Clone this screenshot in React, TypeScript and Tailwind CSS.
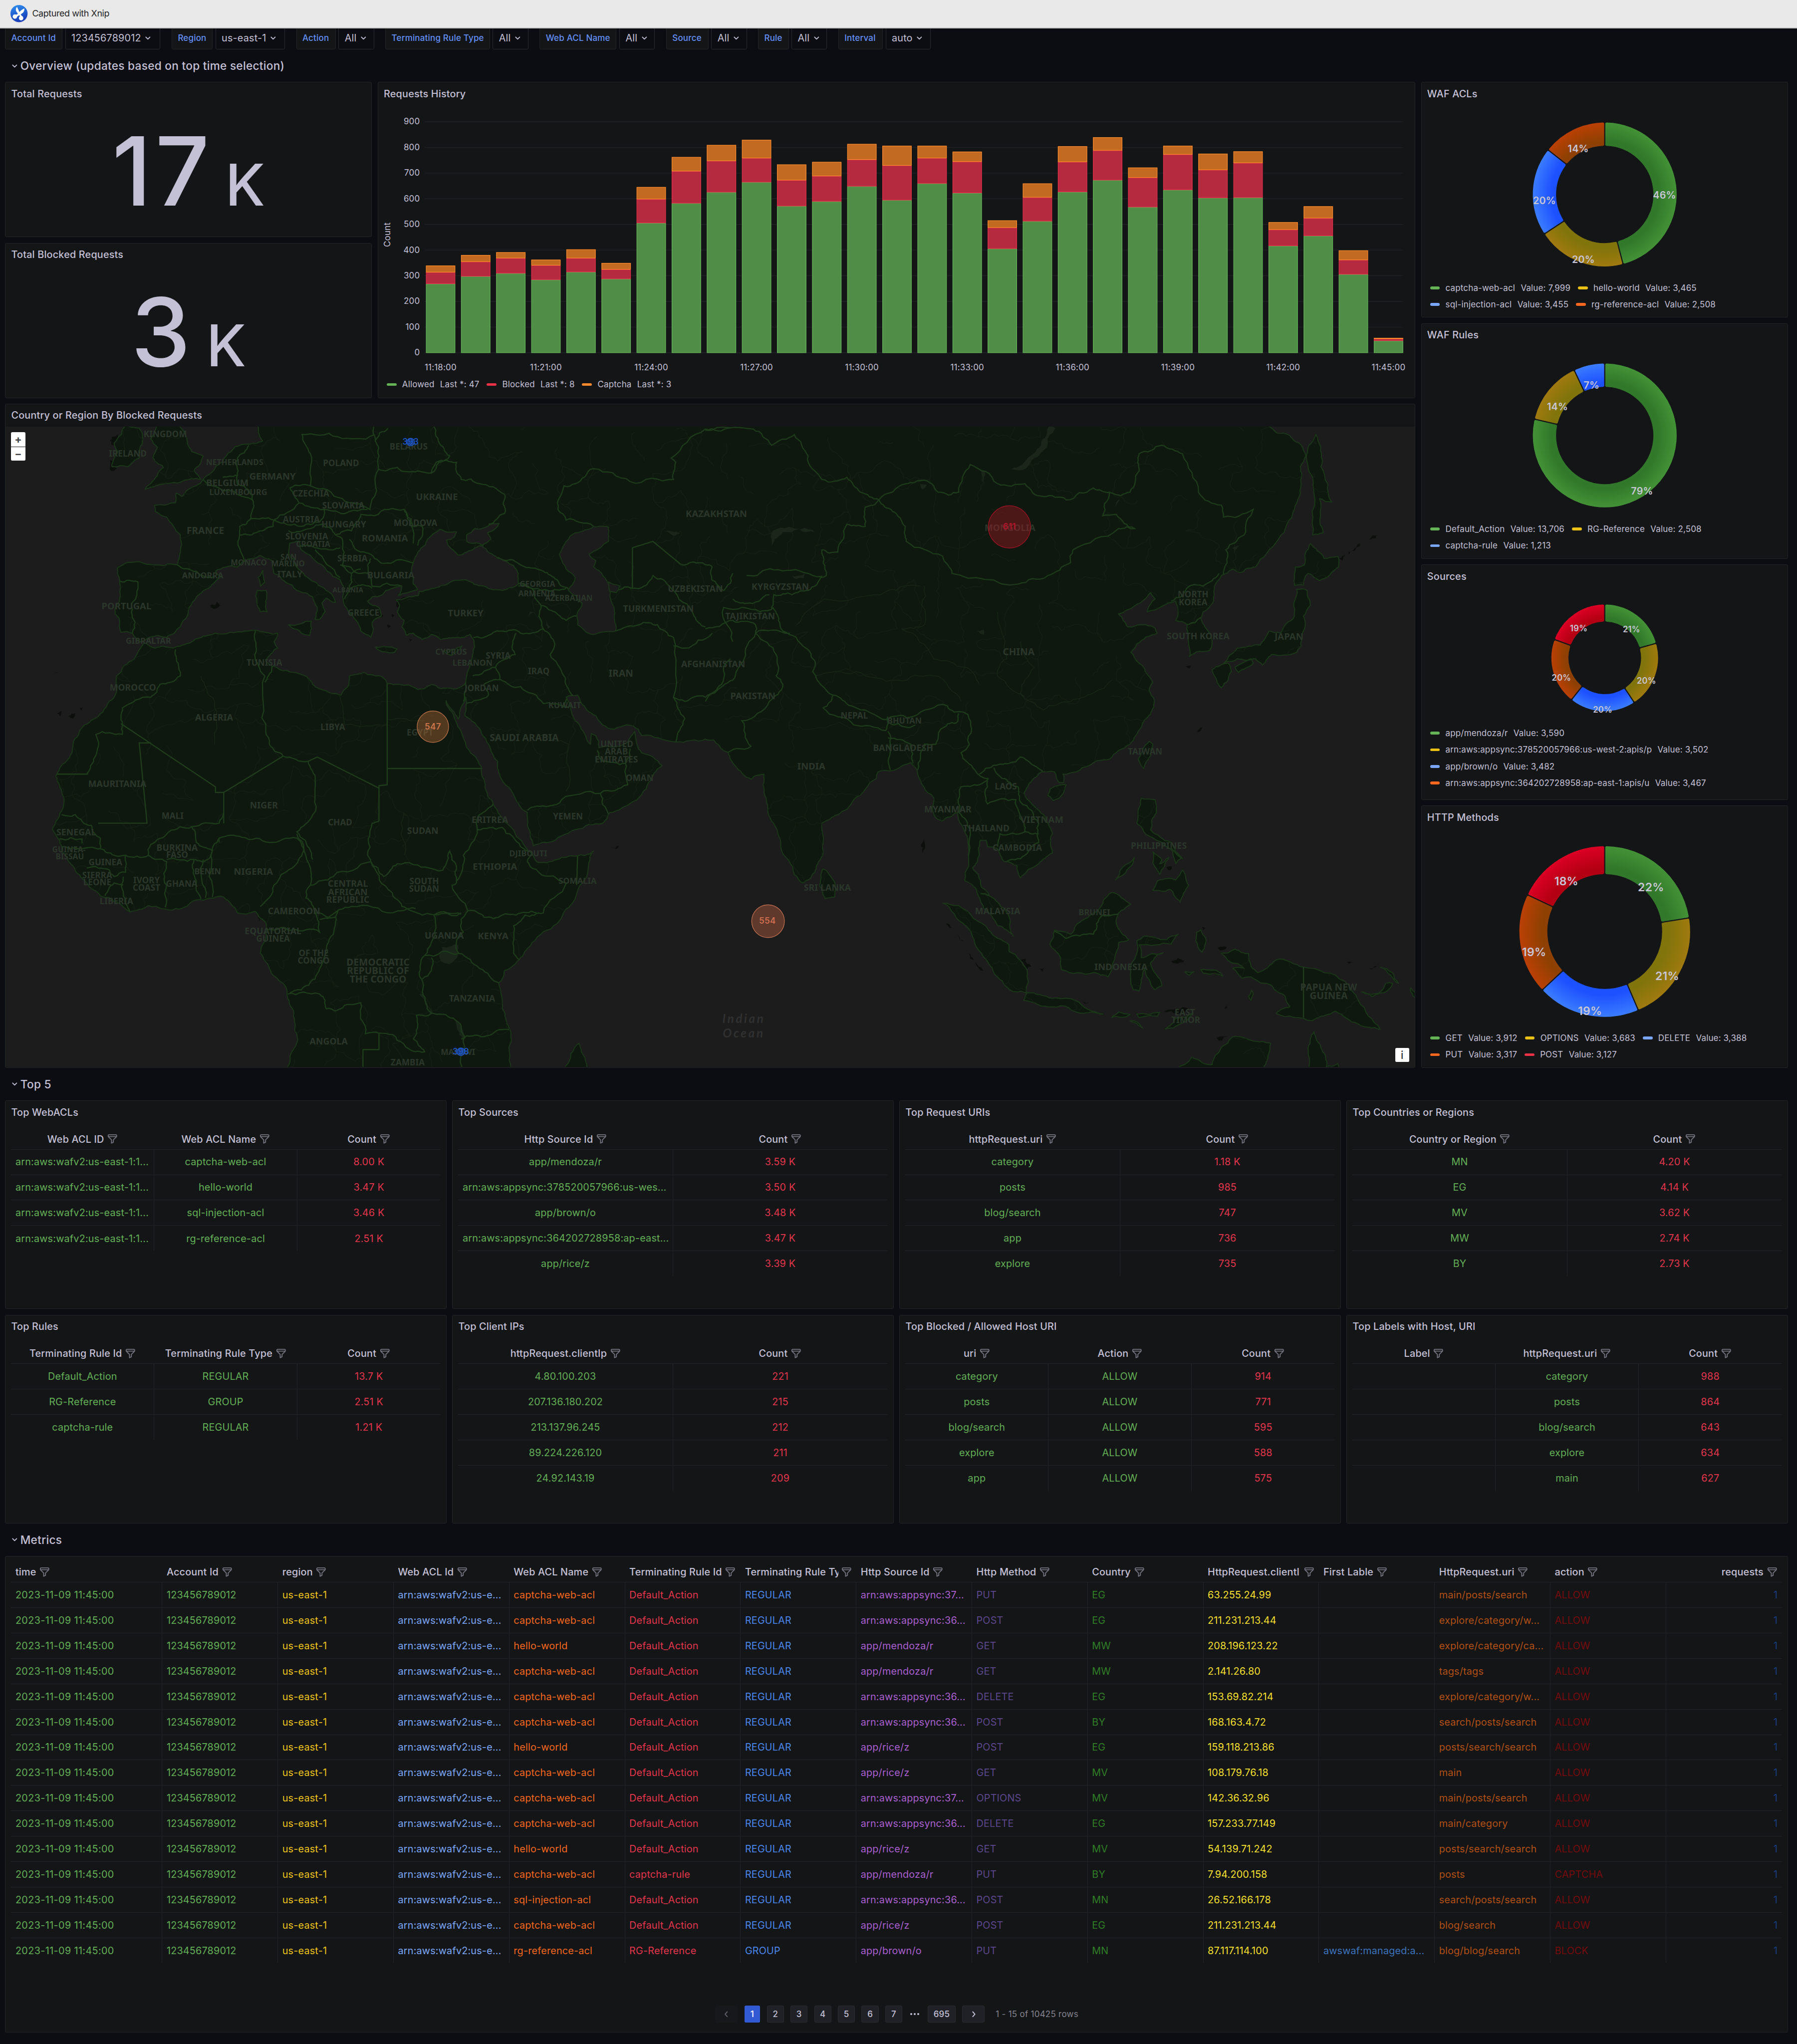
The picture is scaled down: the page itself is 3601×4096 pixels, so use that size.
import React from "react";

/* ------------------------------------------------------------------ icons */

function FilterIcon() {
  return (
    <svg viewBox="0 0 24 24" className="h-4 w-4 shrink-0 fill-[#73727e]">
      <path d="M19,2H5A3,3,0,0,0,2,5V6.17a3,3,0,0,0,.25,1.2l0,.06a2.81,2.81,0,0,0,.59.86L9,14.41V21a1,1,0,0,0,.47.85A1,1,0,0,0,10,22a1,1,0,0,0,.45-.11l4-2A1,1,0,0,0,15,19V14.41l6.12-6.12a2.81,2.81,0,0,0,.59-.86l0-.06A3,3,0,0,0,22,6.17V5A3,3,0,0,0,19,2ZM13.29,13.29A1,1,0,0,0,13,14v4.38l-2,1V14a1,1,0,0,0-.29-.71L5.41,8H18.59ZM20,6H4V5A1,1,0,0,1,5,4H19a1,1,0,0,1,1,1Z" />
    </svg>
  );
}

function AngleDown() {
  return (
    <svg viewBox="0 0 24 24" className="h-4 w-4 shrink-0 fill-[#c4c1d6]">
      <path d="M17,9.17a1,1,0,0,0-1.41,0L12,12.71,8.46,9.17a1,1,0,0,0-1.41,0,1,1,0,0,0,0,1.42l4.24,4.24a1,1,0,0,0,1.42,0L17,10.59A1,1,0,0,0,17,9.17Z" />
    </svg>
  );
}

function AngleSide({ className }: { className: string }) {
  return (
    <svg viewBox="0 0 16 16" className={className} fill="none" strokeWidth="1.4" strokeLinecap="round" strokeLinejoin="round">
      <path d="M6.6 4.6 L9.6 8 L6.6 11.4" />
    </svg>
  );
}

function ScissorsLogo() {
  return (
    <svg viewBox="83 37 154 158" className="h-[26.3px] w-[25.6px]">
      <defs>
        <linearGradient id="logo" x1="0.3" y1="0" x2="0.6" y2="1">
          <stop offset="0" stopColor="#2f8cec" />
          <stop offset="1" stopColor="#1436b4" />
        </linearGradient>
      </defs>
      <circle cx="160" cy="118" r="74" fill="#c9cbd4" />
      <circle cx="160" cy="114" r="73" fill="url(#logo)" />
      <path d="M143 57 C130 70 130 88 142 104 L160 128 L176 140 L183 132 C166 116 160 88 143 57 Z" fill="#fff" />
      <path d="M206 71 C184 78 165 98 148 118 L132 126 L146 140 L166 124 C190 116 208 98 206 71 Z" fill="#fff" />
      <circle cx="125" cy="140" r="19" fill="#fff" />
      <circle cx="178" cy="153" r="19" fill="#fff" />
    </svg>
  );
}

/* ----------------------------------------------------------------- layout */

function Panel({ title, className = "", children }: { title?: string; className?: string; children?: React.ReactNode }) {
  return (
    <section className={`flex flex-col overflow-hidden rounded-[2px] border border-[#232427] bg-[#141517] ${className}`}>
      {title && <h2 className="flex h-8 shrink-0 items-center px-2 text-sm font-medium">{title}</h2>}
      {children}
    </section>
  );
}

function RowTitle({ children }: { children: React.ReactNode }) {
  return (
    <div className="flex h-[30px] items-center pl-[5.6px] text-base font-medium tracking-[0.2px]">
      <AngleDown />
      <span>{children}</span>
    </div>
  );
}

const variables = [
  { label: "Account Id", value: "123456789012", lw: "w-[81.3px]", vw: "w-[135px]" },
  { label: "Region", value: "us-east-1", lw: "w-[58px]", vw: "w-[98.6px]" },
  { label: "Action", value: "All", lw: "w-[56px]", vw: "w-[50.4px]" },
  { label: "Terminating Rule Type", value: "All", lw: "w-[148.2px]", vw: "w-[50.6px]" },
  { label: "Web ACL Name", value: "All", lw: "w-[109px]", vw: "w-[50.4px]" },
  { label: "Source", value: "All", lw: "w-[60px]", vw: "w-[50.4px]" },
  { label: "Rule", value: "All", lw: "w-[43.4px]", vw: "w-[50.4px]" },
  { label: "Interval", value: "auto", lw: "w-[63px]", vw: "w-[64px]" },
];

function VariableBar() {
  return (
    <div className="flex h-[30px] gap-4 overflow-hidden pl-[7.2px]">
      {variables.map((v) => (
        <div key={v.label} className="-mt-[2px] flex h-8 gap-1">
          <div className={`flex items-center whitespace-nowrap rounded-[2px] border border-[#232427] bg-[#141517] px-2 text-xs font-medium text-[#6390fb] ${v.lw}`}>
            {v.label}
          </div>
          <div className={`flex items-center whitespace-nowrap rounded-[2px] border border-[#2a2b30] pl-2 text-sm ${v.vw}`}>
            {v.value}
            <span className="ml-[2px]">
              <AngleDown />
            </span>
          </div>
        </div>
      ))}
    </div>
  );
}

function Stat({ title, value }: { title: string; value: string }) {
  return (
    <Panel title={title} className="h-[220px]">
      <div className="flex flex-1 items-baseline justify-center pt-[13px] font-medium leading-[1.2]">
        <span className="text-[134.8px] tracking-[0.04em]">{value}</span>
        <span className="ml-[17px] text-[82px] tracking-normal">K</span>
      </div>
    </Panel>
  );
}

type LegendItem = { name: string; value: string; dot: string };

function Legend({ rows, className = "" }: { rows: LegendItem[][]; className?: string }) {
  return (
    <div className={`pt-[0.4px] text-xs tracking-[0.12px] ${className}`}>
      {rows.map((row, i) => (
        <div key={i} className="flex h-[23.6px] items-center gap-[10.5px]">
          {row.map((it) => (
            <div key={it.name} className="flex items-center gap-2 whitespace-nowrap">
              <span className={`h-1 w-3.5 rounded-full ${it.dot}`} />
              <span>{it.name}</span>
              <span>{it.value}</span>
            </div>
          ))}
        </div>
      ))}
    </div>
  );
}

/* -------------------------------------------------------------- bar chart */

// [allowed, allowed + blocked, total] for every minute
const history: [number, number, number][] = [
  [269, 314, 340], [298, 355, 381], [310, 369, 392], [285, 341, 363], [315, 369, 403], [288, 325, 350],
  [506, 599, 646], [583, 708, 763], [626, 748, 810], [665, 759, 830], [572, 673, 734], [590, 689, 744],
  [649, 753, 814], [595, 730, 807], [660, 759, 807], [623, 745, 784], [406, 488, 516], [513, 606, 660],
  [627, 744, 805], [673, 789, 840], [568, 683, 722], [635, 773, 807], [604, 713, 776], [605, 740, 785],
  [417, 480, 509], [456, 525, 571], [306, 362, 399], [47, 55, 58],
];

function HistoryChart() {
  const y = (v: number) => 499.8 - v * 0.3638;
  const x0 = 603.6;
  const pitch = 49.78;
  const w = 41.6;
  const layers = [
    { fill: "#508e48", line: "#65b358" },
    { fill: "#b62a3f", line: "#e2304a" },
    { fill: "#c26a22", line: "#fa8a2c" },
  ];
  return (
    <svg viewBox="536.3 149 1469.4 384" className="block h-[384px] w-full" fill="#c4c1d6" fontSize="12">
      {[0, 1, 2, 3, 4, 5, 6, 7, 8, 9].map((n) => (
        <g key={n}>
          <line x1="601.5" x2="1989.2" y1={y(n * 100)} y2={y(n * 100)} stroke="#212226" strokeWidth="1" />
          <text x="595" y={y(n * 100) - 0.4} textAnchor="end" dominantBaseline="central">
            {n * 100}
          </text>
        </g>
      ))}
      {history.map((h, i) =>
        layers.map((l, k) => {
          const from = k === 0 ? 0 : h[k - 1];
          const top = y(h[k]);
          return (
            <rect
              key={`${i}-${k}`}
              x={x0 + i * pitch + 0.4}
              y={top + 0.5}
              width={w - 0.8}
              height={Math.max(y(from) - top - 0.5, 0.8)}
              fill={l.fill}
              stroke={l.line}
              strokeWidth="0.9"
            />
          );
        }),
      )}
      {["11:18:00", "11:21:00", "11:24:00", "11:27:00", "11:30:00", "11:33:00", "11:36:00", "11:39:00", "11:42:00", "11:45:00"].map((t, i) => (
        <text key={t} x={x0 + i * 3 * pitch + w / 2} y="520.3" textAnchor="middle" dominantBaseline="central">
          {t}
        </text>
      ))}
      <text transform="translate(549 332.5) rotate(-90)" textAnchor="middle" dominantBaseline="central">
        Count
      </text>
    </svg>
  );
}

/* ----------------------------------------------------------------- donuts */

const shades: Record<string, [string, string]> = {
  green: ["#31782a", "#439236"],
  yellow: ["#80740b", "#a07a0e"],
  blue: ["#1c51ff", "#3b7cff"],
  orange: ["#8e4003", "#bb4004"],
  red: ["#b30012", "#dc0024"],
};
const sliceOrder = ["green", "yellow", "blue", "orange", "red"];

function slicePath(cx: number, cy: number, rIn: number, rOut: number, a0: number, a1: number) {
  const pad = 2.8;
  const ri = rIn + 2;
  const ro = rOut - 2;
  const pt = (r: number, a: number) => `${(cx + r * Math.sin(a)).toFixed(2)} ${(cy - r * Math.cos(a)).toFixed(2)}`;
  const oi = Math.asin(pad / ri);
  const oo = Math.asin(pad / ro);
  const large = a1 - a0 > Math.PI ? 1 : 0;
  return `M${pt(ro, a0 + oo)} A${ro} ${ro} 0 ${large} 1 ${pt(ro, a1 - oo)} L${pt(ri, a1 - oi)} A${ri} ${ri} 0 ${large} 0 ${pt(ri, a0 + oi)} Z`;
}

type DonutProps = {
  id: string;
  values: number[];
  cy: number;
  rIn: number;
  rOut: number;
  size: number;
  labels: [string, number, number][];
  top: number;
  height: number;
  className: string;
};

function Donut({ id, values, cy, rIn, rOut, size, labels, top, height, className }: DonutProps) {
  const cx = 2274.9;
  const total = values.reduce((a, b) => a + b, 0);
  let acc = 0;
  return (
    <svg viewBox={`2015.7 ${top} 518.3 ${height}`} className={`block w-full shrink-0 ${className}`}>
      <defs>
        {sliceOrder.map((c) => (
          <radialGradient key={c} id={`${id}-${c}`} gradientUnits="userSpaceOnUse" cx={cx} cy={cy} r={rOut}>
            <stop offset="0.74" stopColor={shades[c][0]} />
            <stop offset="1" stopColor={shades[c][1]} />
          </radialGradient>
        ))}
      </defs>
      {values.map((v, i) => {
        const a0 = (acc / total) * Math.PI * 2;
        acc += v;
        const a1 = (acc / total) * Math.PI * 2;
        const paint = `url(#${id}-${sliceOrder[i]})`;
        return <path key={i} d={slicePath(cx, cy, rIn, rOut, a0, a1)} fill={paint} stroke={paint} strokeWidth="4" strokeLinejoin="round" />;
      })}
      {labels.map(([t, x, y]) => (
        <text key={`${t}${x}`} x={x} y={y} fontSize={size} fontWeight="600" fill="#c8c6d6" textAnchor="middle" dominantBaseline="central">
          {t}
        </text>
      ))}
    </svg>
  );
}

const G = "bg-[#65b257]";
const Y = "bg-[#ecc116]";
const B = "bg-[#7aa6fb]";
const O = "bg-[#fa671e]";
const R = "bg-[#ea3148]";

/* -------------------------------------------------------------------- map */

type Pt = [number, number];

// West half coordinates are used as they are, east half ones start at x = 1545.
const west = (s: string): Pt[] => {
  const n = s.trim().split(/\s+/).map(Number);
  const out: Pt[] = [];
  for (let i = 0; i < n.length; i += 2) out.push([n[i] / 1.5448, 570 + n[i + 1] / 1.6505]);
  return out;
};
const east = (s: string): Pt[] => west(s).map(([x, y]) => [x + 1000, y] as Pt);

function noise(seed: number) {
  const v = Math.sin(seed * 127.1 + 311.7) * 43758.5453;
  return v - Math.floor(v) - 0.5;
}

// Splits long segments and shifts the new points sideways, for a natural line.
function rough(points: Pt[], amount: number, closed: boolean) {
  let pts = closed ? [...points, points[0]] : points;
  for (let pass = 0; pass < 3; pass++) {
    const next: Pt[] = [];
    for (let i = 0; i < pts.length - 1; i++) {
      const [ax, ay] = pts[i];
      const [bx, by] = pts[i + 1];
      next.push(pts[i]);
      const len = Math.hypot(bx - ax, by - ay);
      if (len > 5) {
        const k = noise(ax * 1.3 + by * 0.7 + pass) * amount * Math.min(len, 30);
        next.push([(ax + bx) / 2 - ((by - ay) / len) * k, (ay + by) / 2 + ((bx - ax) / len) * k]);
      }
    }
    next.push(pts[pts.length - 1]);
    pts = next;
  }
  return "M" + pts.map(([x, y]) => `${x.toFixed(1)} ${y.toFixed(1)}`).join("L") + (closed ? "Z" : "");
}

const mainland: Pt[] = [
  ...west(
    "563 40 566 70 575 90 543 97 515 103 500 118 488 138 462 165 445 180 430 195 408 207 398 220 386 212 384 235 368 238 338 241 340 255 365 268 380 290 395 310 396 340 388 380 345 380 280 374 257 387 262 415 262 460 252 495 262 510 265 538 290 540 308 560 335 548 365 550 395 525 410 500 414 480 430 455 462 430 485 408 472 395 495 385 520 385 535 372 570 358 595 370 600 400 625 420 650 440 685 455 695 480 690 508 700 508 712 490 705 470 715 458 735 468 722 445 690 420 665 400 650 385 632 355 634 330 655 325 660 345 690 370 745 415 752 430 750 455 765 490 780 510 790 535 812 550 818 530 815 515 835 500 830 480 805 465 815 455 838 450 845 440 880 430 872 452 890 446 915 438 905 425 902 400 905 375 915 350 930 335 948 308 963 297 1000 303 995 315 978 322 980 330 1003 357 1040 340 1058 335 1050 330 1022 325 1022 310 1040 295 1068 290 1093 283 1085 295 1068 305 1075 320 1055 335 1090 365 1125 382 1135 400 1135 425 1100 440 1060 430 1020 415 990 418 950 435 918 442 916 452 890 457 868 462 875 475 870 490 885 510 880 525 890 545 905 540 925 555 945 543 965 555 1000 550 1030 543 1037 555 1035 590 1032 610 1020 655 1005 668 960 668 945 660 915 672 875 660 848 658 840 645 795 632 765 640 762 665 747 685 715 675 685 660 672 642 612 625 582 605 608 575 600 560 608 540 598 543 560 533 520 537 455 545 420 560 378 575 340 575 315 563 295 600 255 640 250 690 215 735 185 755 160 800 145 840 122 875 135 910 138 950 115 1000 130 1025 135 1050 160 1085 190 1125 220 1155 285 1193 325 1178 385 1185 430 1165 490 1158 520 1195 560 1192 580 1215 583 1250 570 1290 590 1325 620 1360 633 1400 645 1450 652 1490 635 1530 625 1580 1120 1580 1118 1500 1115 1465 1100 1420 1092 1360 1105 1330 1140 1300 1165 1265 1220 1220 1255 1170 1285 1110 1300 1050 1262 1062 1220 1070 1175 1075 1165 1055 1150 1040 1115 990 1080 940 1062 900 1055 855 1030 820 1010 770 985 720 977 698 990 720 1003 741 1018 700 1020 690 1018 733 1040 750 1070 800 1090 840 1095 875 1130 930 1155 960 1155 990 1168 1038 1200 1030 1260 1000 1320 985 1335 960 1385 935 1415 905 1420 890 1450 850 1430 830 1405 820 1395 800 1390 770 1375 795 1350 805 1312 808 1305 780 1295 775 1293 800 1280 775 1255 735 1250 710 1240 690 1265 685 1285 720 1320 755 1345 765 1375 755 1398 765 1405 780 1480 795",
  ),
  ...east(
    "0 788 18 790 40 815 50 820 65 850 100 882 128 870 130 920 145 980 165 1040 195 1105 213 1125 240 1100 252 1070 258 1030 255 985 290 965 325 930 375 880 378 865 410 862 425 855 450 843 465 870 500 925 503 970 518 980 552 960 562 990 575 1030 577 1085 568 1120 585 1130 602 1165 610 1185 640 1225 675 1250 665 1205 640 1170 622 1155 605 1135 598 1105 585 1090 600 1060 602 1025 615 1025 618 1040 640 1045 655 1075 683 1085 690 1113 730 1080 760 1055 760 1010 745 975 715 940 698 915 715 885 735 865 765 865 775 890 785 890 783 870 840 850 885 835 930 800 955 760 975 730 983 695 972 675 980 655 960 620 932 585 945 565 990 540 985 528 955 520 925 525 905 495 925 485 975 445 985 460 968 490 1030 465 1035 480 1030 510 1055 520 1058 560 1060 595 1105 580 1108 545 1085 505 1090 490 1113 465 1115 430 1130 405 1155 390 1170 398 1205 385 1255 320 1290 250 1305 190 1303 150 1315 125 1305 100 1280 77 1250 70 1210 40",
  ),
];

const islands: Pt[][] = [
  west("350 40 338 70 330 85 345 105 335 130 358 152 330 190 318 203 350 192 400 184 440 180 425 160 445 125 420 115 410 90 380 40"),
  west("275 50 250 95 258 115 245 150 280 150 305 130 312 95 305 60"),
  west("563 440 583 440 585 490 570 490"),
  west("576 393 580 420 570 430 565 410"),
  west("632 520 682 512 678 545 640 528"),
  west("822 572 870 577 865 584 830 580"),
  west("972 582 1012 570 990 592"),
  west("1228 1580 1250 1525 1268 1500 1282 1540 1288 1580"),
  east("1337 75 1342 90 1348 150 1372 233 1345 225 1353 305 1330 310 1332 200 1320 150 1322 100"),
  east("1325 330 1355 365 1385 360 1387 385 1345 417 1320 400 1310 428 1290 428 1292 385 1312 380"),
  east("1295 437 1318 440 1325 475 1310 500 1312 530 1305 570 1295 585 1240 590 1220 615 1205 600 1165 600 1135 610 1165 575 1215 568 1235 535 1260 540 1290 500"),
  east("1110 625 1145 610 1152 630 1145 650 1130 668 1120 650"),
  east("1160 620 1195 600 1200 610 1168 632"),
  east("972 793 980 800 976 825 960 857 948 835"),
  east("755 905 790 895 780 920 762 932 750 920"),
  east("258 1092 275 1110 285 1135 283 1158 262 1162 250 1130"),
  east("520 1172 555 1178 620 1235 665 1270 665 1285 705 1330 703 1382 680 1380 640 1345 605 1290 570 1225"),
  east("705 1382 760 1395 810 1400 870 1432 830 1430 760 1415 697 1400"),
  east("765 1235 800 1245 830 1210 860 1190 890 1147 932 1175 905 1195 900 1220 928 1258 905 1265 882 1345 850 1335 780 1328 778 1300 755 1270"),
  east("945 1260 960 1250 1010 1258 1035 1245 1020 1268 950 1270 955 1300 1003 1288 975 1312 1000 1365 985 1375 962 1325 950 1378 937 1375 932 1320 945 1290"),
  east("955 927 985 930 988 960 975 1000 1020 1030 1045 1068 1000 1030 965 1012 945 985"),
  east("980 1052 1000 1070 995 1080 1015 1065 995 1105 980 1078"),
  east("1022 1045 1042 1066 1030 1080"),
  east("1045 1095 1058 1130 1040 1170 1018 1140 980 1142 990 1120 1030 1118"),
  east("940 1065 937 1078 898 1118 925 1080"),
  east("1130 1290 1160 1280 1190 1290 1195 1320 1210 1335 1250 1305 1310 1322 1400 1355 1430 1400 1478 1468 1430 1455 1380 1425 1330 1447 1250 1430 1280 1415 1270 1390 1240 1365 1195 1345 1175 1348 1155 1325 1180 1325 1150 1310"),
  east("890 1440 905 1427 930 1433"),
  east("945 1432 995 1428 990 1437 950 1440"),
  east("930 1448 945 1450 958 1465"),
  east("1008 1467 1030 1442 1068 1430 1040 1455"),
  east("1050 1333 1070 1333 1060 1341"),
  east("1085 1328 1120 1330 1133 1343 1090 1336"),
  east("1076 1240 1085 1235 1096 1255 1088 1287 1074 1260"),
  east("1190 1390 1196 1376 1200 1385 1195 1400"),
  east("1437 1380 1475 1383 1490 1360 1505 1360 1490 1380 1460 1391"),
  east("1478 1322 1505 1335 1518 1360 1500 1340"),
  east("1545 1370 1560 1395 1550 1390"),
  east("1030 1560 1065 1533 1110 1550 1130 1510 1155 1485 1200 1495 1238 1500 1232 1530 1222 1580 1030 1580"),
  east("1318 1580 1320 1510 1333 1473 1348 1510 1360 1555 1385 1548 1390 1580"),
];

const seas: Pt[][] = [
  west("1300 290 1333 292 1333 325 1290 355 1305 370 1300 385 1325 410 1345 480 1348 535 1300 543 1265 520 1265 490 1275 470 1245 440 1260 410 1240 390 1225 355 1240 325 1260 305"),
  west("1333 420 1358 430 1350 445 1335 442"),
];

const lakes: Pt[][] = [
  west("968 1275 1003 1270 1003 1295 985 1315 965 1308"),
  east("752 50 766 60 750 95 715 135 695 158 668 156 700 138 735 100"),
  east("145 335 145 305 165 293 235 298 240 304 170 303 152 320"),
  east("190 405 220 400 215 412 195 412"),
  east("605 160 613 162 608 188"),
  east("470 190 485 192 475 204"),
  east("895 245 908 225 903 235"),
  east("1155 340 1170 335 1160 352"),
  east("595 535 610 532 610 545"),
  west("918 1385 928 1385 948 1428 942 1432"),
  west("1000 1445 1014 1470 1015 1500 1006 1480"),
  west("1455 300 1490 305 1475 312"),
  west("1160 490 1170 492 1155 503"),
  west("1195 510 1206 525 1200 530"),
];

const islets: Pt[][] = [
  west("460 475 475 467 482 475 468 483"),
  west("150 733 165 727 160 740"),
  west("175 715 183 710 178 722"),
  west("125 728 135 722 132 735"),
  west("1338 1040 1355 1038 1350 1045"),
  west("245 80 258 75 252 100 244 98"),
  west("240 135 262 140 250 160 240 156"),
  west("868 470 890 455 878 472 870 480"),
  west("610 62 622 62 615 72"),
  west("645 65 655 68 650 78"),
  west("564 1205 572 1200 568 1215"),
  west("118 630 128 631 124 634"),
  west("833 495 840 498 836 503"),
  west("848 520 856 524 850 528"),
  west("895 552 903 555 897 560"),
  west("858 495 864 498 860 503"),
  east("688 1305 702 1302 714 1320 704 1328"),
  east("732 1325 742 1324 740 1333"),
  east("576 1290 588 1305 580 1302"),
  east("552 1245 566 1262 558 1258"),
  east("526 1220 540 1230 534 1230"),
  east("590 1308 608 1330 600 1326"),
  east("1120 1488 1144 1484 1132 1494"),
  east("1405 1310 1420 1311 1410 1314"),
  east("1454 1325 1476 1308 1462 1326"),
  east("1020 1308 1050 1306 1040 1311"),
  east("1122 1277 1142 1276 1135 1282"),
  east("820 1402 842 1402 835 1407"),
  east("475 1050 479 1022 480 1030 476 1056"),
  east("1408 350 1434 330 1430 338 1410 356"),
  east("1388 365 1402 355 1395 370"),
  east("1454 322 1474 310 1468 318"),
  east("1078 772 1088 760 1084 770"),
  east("1052 618 1064 616 1060 623"),
  east("1136 1420 1146 1408 1142 1418"),
  east("1010 1088 1022 1086 1018 1096"),
  east("1240 70 1262 85 1250 88"),
  east("1000 1428 1060 1426 1040 1431"),
  east("1088 1228 1095 1230 1090 1236"),
];

const borders: Pt[][] = [
  west("262 418 302 420 300 450 288 490 290 540"),
  west("388 380 430 395 470 408"),
  west("445 180 500 205 520 215 555 232 550 270 525 290 525 310 535 372"),
  west("550 272 600 275 598 290 560 305 525 310"),
  west("488 175 520 170 520 130 545 100"),
  west("555 232 545 205 520 190 520 170"),
  west("662 75 680 120 680 195 635 200 655 235 600 275"),
  west("600 275 660 290 700 280 710 250 655 235"),
  west("820 40 822 90 830 125 822 190 810 250 750 225 680 195"),
  west("710 250 760 258 805 250"),
  west("632 300 680 295 705 285 735 310 770 300 790 262"),
  west("790 262 820 265 885 250 905 290 925 290 915 335"),
  west("885 250 905 300 905 330"),
  west("765 320 790 350 830 372 880 368 905 375"),
  west("812 365 805 400 815 430 880 430"),
  west("735 310 750 320 750 380 785 400 805 400"),
  west("640 330 690 340 730 345 745 340"),
  west("690 345 745 410"),
  west("770 400 765 440 755 460"),
  west("765 440 780 430 815 435"),
  west("745 380 770 400 790 390"),
  west("828 155 870 152 915 160 945 165 955 140 1000 140 1010 180 1050 190 1105 215 1105 260 1070 285"),
  west("945 165 985 125 960 90 950 40"),
  west("822 90 850 60"),
  west("660 75 740 80 820 75"),
  west("1037 550 1070 545 1100 535 1140 540 1190 530"),
  west("1135 430 1165 435 1185 475 1180 500 1190 530"),
  west("1090 362 1140 380 1190 395 1220 415 1250 440"),
  west("1135 425 1165 435 1200 440 1240 435"),
  west("1185 475 1215 490 1240 510 1265 500"),
  west("1190 530 1215 565 1205 590 1235 640 1245 670 1262 690"),
  west("1130 540 1128 590 1085 620 1035 640"),
  west("1085 620 1095 648 1060 660 1070 685 1020 705"),
  west("1095 648 1140 665 1190 705 1235 712 1250 710"),
  west("1235 712 1245 690"),
  west("1155 955 1175 945 1230 930 1315 915 1375 895 1370 845 1380 810"),
  west("1370 845 1320 840 1308 815"),
  west("1315 915 1333 965"),
  west("1020 655 1015 700"),
  west("560 535 558 590 580 640 582 770 590 800 620 828 675 840"),
  west("608 600 588 640 580 655"),
  west("385 578 390 610 395 640 350 660 330 690 268 715 268 752"),
  west("268 752 268 777 210 777 208 830 190 870"),
  west("480 1030 480 1020 530 1018 590 1030 650 1020 665 1050 640 1090 600 1130 570 1180"),
  west("480 1020 462 1060 465 1158"),
  west("675 840 690 885 685 965 650 1005 680 1050 685 1070"),
  west("830 980 815 985 805 1060 812 1075 730 1110 680 1130 680 1090 650 1010"),
  west("680 1130 670 1160 690 1195"),
  west("690 1195 720 1205 770 1180 860 1195 910 1185"),
  west("812 1075 840 1110 870 1080 940 1090 970 1095 985 1050 1000 1090"),
  west("812 1075 850 1140 880 1180 925 1200 1010 1195"),
  west("1000 1090 1000 1125 990 1130 1025 1190 1060 1205 1100 1200 1130 1200 1175 1195"),
  west("1080 940 1050 965 1045 1000 1015 1060 1000 1120"),
  west("1045 1000 1100 995 1140 1040 1165 1055"),
  west("1165 1055 1155 1075 1180 1100 1240 1125 1190 1195 1150 1200 1125 1225 1125 1290 1138 1305"),
  west("1025 1190 1010 1210 1015 1240 1000 1260 1005 1290"),
  west("1005 1290 1050 1325 1095 1360"),
  west("1010 1198 950 1200 955 1230 930 1295 1005 1290"),
  west("740 1190 730 1245 710 1300 690 1350 660 1375 630 1385"),
  west("630 1385 700 1385 715 1420 745 1420 790 1405 800 1478 860 1480 910 1520 930 1520 905 1490"),
  west("930 1295 920 1320 925 1380 945 1430 985 1440 1010 1460 1012 1557"),
  west("905 1490 912 1435 945 1430"),
  west("945 1300 945 1330 925 1350"),
  west("570 1240 600 1235 640 1235 700 1240 690 1195"),
  west("700 1210 735 1205"),
  west("1010 1490 1060 1485 1115 1468"),
  west("135 965 165 965 200 990 220 1020 220 1045 170 1045 130 1040"),
  west("130 1022 180 1022 180 1032"),
  west("220 1045 250 1060 275 1060 325 1060 330 1035 370 1005 420 993 480 985 490 960"),
  west("275 1060 275 1100 250 1110 240 1095 190 1090"),
  west("270 1110 270 1150 285 1193"),
  west("230 1155 250 1125 270 1130"),
  west("325 1060 365 1075 365 1130 362 1182"),
  west("365 1070 425 1070 430 1120 440 1162"),
  west("420 993 430 1030 465 1050 455 1070 425 1070"),
  west("445 1070 450 1160"),
  west("1348 535 1400 520 1440 520 1475 550 1475 690 1500 740 1480 795"),
  west("1475 690 1500 700 1545 690 1580 660 1600 600"),
  west("1475 570 1500 575 1560 540"),
  west("1385 435 1410 430 1430 405 1470 435 1520 500 1545 525"),
  west("1333 420 1350 440 1385 435"),
  west("1300 290 1240 275 1222 250 1235 195 1260 190 1300 155 1380 185 1475 180 1480 140 1470 130 1545 62 1600 60"),
  [...west("1490 378 1530 375"), ...east("15 385 14 415 40 440 60 400")],
  east("0 65 105 62 145 100 195 75 225 125 255 180 310 175 340 210 380 228 350 245 350 290 310 285 290 350 255 345 265 405 225 400 150 392 90 405"),
  east("255 405 225 440 190 450 150 450 145 480 160 510 170 535 220 575 240 605 235 630 245 650 280 685 320 710 400 742 455 735 530 710 545 725 575 730 578 800 560 820 590 860 620 880"),
  east("380 228 440 190 475 182 510 210 555 210 580 145 640 190 700 190 740 220 790 228 850 200 885 210 870 265 900 262 940 295 905 295 805 345 800 375 750 405 685 425 540 400 520 360 440 325 438 290 410 255 380 228"),
  east("885 210 910 218 930 210 950 160 950 120 1000 100 1045 120 1080 210 1130 240 1135 268 1200 250 1180 310 1140 345 1135 405"),
  east("1020 465 1060 430 1090 430 1125 400"),
  east("1055 520 1085 503"),
  east("280 685 258 715 325 755 395 768 400 735"),
  east("405 752 440 760 460 755"),
  east("400 770 405 800 405 860"),
  east("455 845 450 800 400 785"),
  east("465 860 480 800 505 800 515 765 550 750 555 728"),
  east("110 540 155 590 155 640 170 660 140 700 80 745 100 805 40 820"),
  east("0 530 60 510 110 520 110 540 185 540"),
  east("110 540 85 600 60 650 20 680 0 700"),
  east("60 560 40 480 120 490 150 480"),
  east("60 460 90 470 140 450"),
  east("620 880 600 895 560 900 555 960 580 1000 575 1085"),
  east("600 870 630 850 665 845 690 830 720 850 740 868"),
  east("618 885 618 940 680 930 698 985 700 1005"),
  east("632 855 650 880 685 900 690 935 730 985 730 1030 700 1060 655 1078"),
  east("640 1040 645 1010 700 1005 730 1010"),
  east("603 1150 640 1165"),
  east("765 1238 790 1255 850 1245 870 1200 910 1195"),
];

// Survey lines of North Africa, straight on the ground.
const straight: Pt[][] = [
  west("848 658 848 895 830 897 830 980"),
  west("848 857 1055 857"),
  west("675 840 695 830 830 903"),
  west("620 828 490 913"),
  west("490 985 490 913 472 913 472 900 265 752"),
  west("330 797 305 797 322 985 215 985"),
  west("122 870 193 870"),
  west("795 1560 795 1515 830 1515 830 1478"),
  west("1265 1062 1263 1130"),
  west("1385 435 1385 340 1430 325 1490 378"),
  east("1310 1322 1310 1440"),
];

const faint: Pt[][] = [
  west("750 640 755 755 848 755"),
  west("848 742 930 745"),
  west("885 960 885 1060"),
  west("440 640 470 700 470 800"),
  west("1240 910 1245 800 1180 780"),
  east("480 430 480 520 430 530 500 600 570 620 600 660"),
  east("200 520 260 460 400 440 470 430"),
  east("240 640 330 630 420 650 500 640 560 700"),
  east("690 560 720 620 690 680 740 720 800 700 850 680 890 650"),
  east("640 490 660 600 640 640 700 690"),
];

const labels: [string, number, number, number?][] = [
  ["KINGDOM", 362, 73], ["IRELAND", 280, 119], ["NETHERLANDS", 514, 139, 11], ["POLAND", 747, 141], ["GERMANY", 597, 172, 13],
  ["BELGIUM", 498, 187, 13], ["BELARUS", 895, 103], ["LUXEMBOURG", 522, 210, 11.5], ["CZECHIA", 681, 213], ["SLOVAKIA", 752, 241],
  ["UKRAINE", 957, 219, 13], ["AUSTRIA", 660, 273], ["HUNGARY", 753, 284, 12.5], ["MOLDOVA", 910, 281], ["FRANCE", 450, 299, 13.5],
  ["SLOVENIA", 672, 313], ["ROMANIA", 843, 316, 13], ["CROATIA", 686, 331, 11], ["MONACO", 545, 374, 11], ["SAN", 632, 361, 11], ["MARINO", 631, 377, 11],
  ["SERBIA", 772, 364], ["ITALY", 635, 401, 13], ["BULGARIA", 856, 403, 13], ["ANDORRA", 444, 405, 11.5], ["ALBANIA", 762, 439, 9.5], ["PORTUGAL", 277, 475, 13],
  ["GREECE", 796, 492], ["TURKEY", 1020, 492, 13], ["GEORGIA", 1177, 425, 11], ["ARMENIA", 1176, 447, 11], ["AZERBAIJAN", 1246, 457, 11],
  ["GIBRALTAR", 325, 558, 11.5], ["TUNISIA", 579, 609], ["CYPRUS", 988, 583, 11.5], ["LEBANON", 1035, 609, 11.5], ["SYRIA", 1091, 592], ["IRAQ", 1180, 628],
  ["IRAN", 1360, 634, 13.5], ["JORDAN", 1055, 668], ["KUWAIT", 1237, 708, 11.5], ["MOROCCO", 291, 667, 12.5], ["ALGERIA", 469, 736, 12.5], ["LIBYA", 729, 759],
  ["EGYPT", 920, 772], ["SAUDI ARABIA", 1148, 785, 13.5], ["UNITED", 1351, 799], ["ARAB", 1350, 817], ["EMIRATES", 1350, 835, 12.5], ["OMAN", 1401, 878],
  ["YEMEN", 1244, 968], ["MAURITANIA", 257, 892, 12.5], ["MALI", 378, 967], ["NIGER", 578, 942, 12.5], ["CHAD", 745, 983], ["SUDAN", 926, 1002, 12.5], ["ERITREA", 1073, 976, 12.5],
  ["SENEGAL", 167, 1005, 12.5], ["GUINEA-", 151, 1046, 11], ["BISSAU", 153, 1063, 11], ["GUINEA", 231, 1076], ["BURKINA", 388, 1041, 12.5], ["FASO", 388, 1058],
  ["SIERRA", 213, 1106], ["LEONE", 213, 1123], ["IVORY", 321, 1118], ["COAST", 321, 1136], ["GHANA", 398, 1126], ["BENIN", 455, 1098, 11.5],
  ["NIGERIA", 555, 1097, 13], ["LIBERIA", 255, 1167], ["DJIBOUTI", 1157, 1055, 11.5], ["ETHIOPIA", 1084, 1085, 13], ["SOMALIA", 1265, 1120, 11.5],
  ["SOUTH", 929, 1120], ["SUDAN", 929, 1138], ["CENTRAL", 762, 1126, 12.5], ["AFRICAN", 762, 1145, 12.5], ["REPUBLIC", 762, 1163, 12.5], ["CAMEROON", 644, 1190, 12.5],
  ["EQUATORIAL", 598, 1237, 12.5], ["GUINEA", 598, 1255], ["OF THE", 687, 1289], ["CONGO", 687, 1306], ["UGANDA", 973, 1247, 12.5], ["KENYA", 1080, 1248, 13],
  ["DEMOCRATIC", 828, 1310, 13.5], ["REPUBLIC OF", 828, 1330, 13.5], ["THE CONGO", 828, 1350, 13.5], ["TANZANIA", 1034, 1394, 12.5], ["ANGOLA", 720, 1495, 12.5],
  ["MALAWI", 1003, 1521, 11.5], ["ZAMBIA", 893, 1544], ["KAZAKHSTAN", 1569, 259, 13], ["UZBEKISTAN", 1523, 435, 12.5], ["TURKMENISTAN", 1442, 482, 12.5],
  ["AFGHANISTAN", 1562, 611, 12.5], ["KYRGYZSTAN", 1709, 430, 12.5], ["TAJIKISTAN", 1643, 499, 12.5], ["PAKISTAN", 1649, 686, 13], ["NEPAL", 1871, 732],
  ["BHUTAN", 1981, 745, 11.5], ["BANGLADESH", 1978, 808, 12.5], ["INDIA", 1777, 850, 13], ["CHINA", 2231, 583, 13.5], ["MONGOLIA", 2212, 293, 12.5],
  ["NORTH", 2613, 449], ["KOREA", 2613, 467], ["SOUTH KOREA", 2624, 546, 12.5], ["JAPAN", 2823, 547, 13], ["TAIWAN", 2508, 817], ["LAOS", 2203, 898],
  ["MYANMAR", 2076, 952, 12.5], ["VIETNAM", 2282, 975, 13], ["THAILAND", 2160, 996, 12.5], ["CAMBODIA", 2228, 1041, 12.5], ["PHILIPPINES", 2538, 1037, 12.5],
  ["SRI LANKA", 1812, 1135, 12.5], ["MALAYSIA", 2185, 1190, 12.5], ["BRUNEI", 2397, 1193, 11.5], ["INDONESIA", 2455, 1320, 13],
  ["PAPUA NEW", 2910, 1369, 13.5], ["GUINEA", 2910, 1389, 13.5], ["EAST", 2595, 1428], ["TIMOR", 2597, 1445],
];

function provinces() {
  const step = 33;
  const at = (i: number, j: number): Pt => [10 + i * step + noise(i * 7.3 + j * 13.1) * 30, 600 + j * step + noise(i * 3.7 + j * 5.9 + 50) * 30];
  const out: string[] = [];
  for (let i = 0; i < 60; i++)
    for (let j = 0; j < 28; j++) {
      if (noise(i * 1.9 + j * 4.3) > 0.05) out.push(rough([at(i, j), at(i + 1, j)], 0.5, false));
      if (noise(i * 2.7 + j * 6.1 + 9) > 0.05) out.push(rough([at(i, j), at(i, j + 1)], 0.5, false));
    }
  return out.join("");
}

function WorldMap() {
  const land = [mainland, ...islands].map((p) => rough(p, 0.22, true)).join("");
  const water = seas.map((p) => rough(p, 0.2, true)).join("");
  return (
    <svg viewBox="7.8 604.2 1998 908.5" preserveAspectRatio="none" className="block h-full w-full" fontFamily="'Noto Sans', 'Open Sans', sans-serif">
      <defs>
        <clipPath id="land">
          <path d={land} />
        </clipPath>
      </defs>
      <rect x="0" y="600" width="2020" height="920" fill="#1c1c1c" />
      <path d={islets.map((p) => rough(p, 0.5, true)).join("")} fill="#0c0f0c" />
      <path d={land} fill="#0f180f" stroke="#1b3519" strokeWidth="1.5" strokeLinejoin="round" />
      <g clipPath="url(#land)" fill="none">
        <path d={provinces()} stroke="#142013" strokeWidth="1" />
        <path d={faint.map((p) => rough(p, 0.3, false)).join("")} stroke="#162515" strokeWidth="1.2" />
        <path d={lakes.map((p) => rough(p, 0.3, true)).join("")} fill="#1a261a" />
        <path d={borders.map((p) => rough(p, 0.3, false)).join("")} stroke="#1d3b1a" strokeWidth="1.7" />
        <path d={straight.map((p) => rough(p, 0, false)).join("")} stroke="#1f3d1b" strokeWidth="1.7" />
      </g>
      <path d={water} fill="#1c1c1c" stroke="#1b3519" strokeWidth="1.4" />
      <g fill="#2b362b" fontWeight="700" textAnchor="middle" letterSpacing="0.1">
        {labels.map(([t, x, y, s], i) => (
          <text key={i} x={x / 1.5448} y={570 + y / 1.6505} fontSize={s ?? 12} dominantBaseline="central">
            {t}
          </text>
        ))}
      </g>
      <g fill="#303030" fontSize="17" fontStyle="italic" fontWeight="700" textAnchor="middle" letterSpacing="2.6" fontFamily="Lato, sans-serif">
        <text x="1054.5" y="1450.5">Indian</text>
        <text x="1054.5" y="1470.5">Ocean</text>
      </g>
      <g fontFamily="Inter, sans-serif" fontSize="12" fontWeight="600" textAnchor="middle" letterSpacing="0.2">
        <circle cx="613.7" cy="1029.9" r="22.3" fill="#d9803f" fillOpacity="0.32" stroke="#b06c45" strokeWidth="1" />
        <text x="613.7" y="1029.9" fill="#cd754d" dominantBaseline="central">547</text>
        <circle cx="1088.9" cy="1305.8" r="23.2" fill="#e8764d" fillOpacity="0.32" stroke="#b96a4d" strokeWidth="1" />
        <text x="1088" y="1305" fill="#cf6f4f" dominantBaseline="central">554</text>
        <circle cx="1431.1" cy="746.4" r="30" fill="#c4162a" fillOpacity="0.34" stroke="#9c1224" strokeWidth="1" />
        <text x="1431.1" y="745.8" fill="#b3142a" dominantBaseline="central">611</text>
        <circle cx="582.2" cy="626" r="5.4" fill="#1c4fb4" fillOpacity="0.6" stroke="#1d57cf" strokeWidth="1" />
        <text x="582.2" y="625.7" fill="#1d57cf" fontWeight="500" dominantBaseline="central">393</text>
        <circle cx="653.4" cy="1491" r="5.4" fill="#1c4fb4" fillOpacity="0.6" stroke="#1d57cf" strokeWidth="1" />
        <text x="653.4" y="1490.7" fill="#1d57cf" fontWeight="500" dominantBaseline="central">398</text>
      </g>
    </svg>
  );
}

/* ----------------------------------------------------------------- tables */

type TopTable = { title: string; heads: string[]; rows: string[][] };

const topTables: TopTable[] = [
  {
    title: "Top WebACLs",
    heads: ["Web ACL ID", "Web ACL Name", "Count"],
    rows: [
      ["arn:aws:wafv2:us-east-1:1...", "captcha-web-acl", "8.00 K"],
      ["arn:aws:wafv2:us-east-1:1...", "hello-world", "3.47 K"],
      ["arn:aws:wafv2:us-east-1:1...", "sql-injection-acl", "3.46 K"],
      ["arn:aws:wafv2:us-east-1:1...", "rg-reference-acl", "2.51 K"],
    ],
  },
  {
    title: "Top Sources",
    heads: ["Http Source Id", "Count"],
    rows: [
      ["app/mendoza/r", "3.59 K"],
      ["arn:aws:appsync:378520057966:us-wes...", "3.50 K"],
      ["app/brown/o", "3.48 K"],
      ["arn:aws:appsync:364202728958:ap-east...", "3.47 K"],
      ["app/rice/z", "3.39 K"],
    ],
  },
  {
    title: "Top Request URIs",
    heads: ["httpRequest.uri", "Count"],
    rows: [["category", "1.18 K"], ["posts", "985"], ["blog/search", "747"], ["app", "736"], ["explore", "735"]],
  },
  {
    title: "Top Countries or Regions",
    heads: ["Country or Region", "Count"],
    rows: [["MN", "4.20 K"], ["EG", "4.14 K"], ["MV", "3.62 K"], ["MW", "2.74 K"], ["BY", "2.73 K"]],
  },
  {
    title: "Top Rules",
    heads: ["Terminating Rule Id", "Terminating Rule Type", "Count"],
    rows: [["Default_Action", "REGULAR", "13.7 K"], ["RG-Reference", "GROUP", "2.51 K"], ["captcha-rule", "REGULAR", "1.21 K"]],
  },
  {
    title: "Top Client IPs",
    heads: ["httpRequest.clientIp", "Count"],
    rows: [["4.80.100.203", "221"], ["207.136.180.202", "215"], ["213.137.96.245", "212"], ["89.224.226.120", "211"], ["24.92.143.19", "209"]],
  },
  {
    title: "Top Blocked / Allowed Host URI",
    heads: ["uri", "Action", "Count"],
    rows: [["category", "ALLOW", "914"], ["posts", "ALLOW", "771"], ["blog/search", "ALLOW", "595"], ["explore", "ALLOW", "588"], ["app", "ALLOW", "575"]],
  },
  {
    title: "Top Labels with Host, URI",
    heads: ["Label", "httpRequest.uri", "Count"],
    rows: [["", "category", "988"], ["", "posts", "864"], ["", "blog/search", "643"], ["", "explore", "634"], ["", "main", "627"]],
  },
];

function TopPanel({ table }: { table: TopTable }) {
  const cols = table.heads.length === 3 ? "grid-cols-3" : "grid-cols-2";
  return (
    <Panel title={table.title} className="h-[296px]">
      <div className="p-2 text-sm">
        <div className={`grid h-[29px] border-b border-[#232427] ${cols}`}>
          {table.heads.map((h) => (
            <div key={h} className="flex items-center justify-center gap-1 whitespace-nowrap px-1.5 font-medium">
              {h}
              <FilterIcon />
            </div>
          ))}
        </div>
        {table.rows.map((row, r) => (
          <div key={r} className={`grid h-9 ${cols} ${r < table.rows.length - 1 ? "border-b border-[#232427]" : ""}`}>
            {row.map((cell, c) => (
              <div
                key={c}
                className={`flex items-center whitespace-nowrap px-1.5 ${cell.startsWith("arn") ? "justify-start" : "justify-center"} ${
                  c === row.length - 1 ? "text-[#e3354c]" : "border-r border-[#232427] text-[#63b056]"
                }`}
              >
                {cell}
              </div>
            ))}
          </div>
        ))}
      </div>
    </Panel>
  );
}

const metricCols = [
  { head: "time", color: "text-[#63b056] tracking-[0.27px]" },
  { head: "Account Id", color: "text-[#63b056]" },
  { head: "region", color: "text-[#eec31a]" },
  { head: "Web ACL Id", color: "text-[#7ba7fb]" },
  { head: "Web ACL Name", color: "text-[#f4671d]" },
  { head: "Terminating Rule Id", color: "text-[#e3354c]" },
  { head: "Terminating Rule Type", color: "text-[#4a87ee]" },
  { head: "Http Source Id", color: "text-[#a95fd0]" },
  { head: "Http Method", color: "text-[#5b478c]" },
  { head: "Country", color: "text-[#2f7e26]" },
  { head: "HttpRequest.clientI", color: "text-[#f8e02f]" },
  { head: "First Lable", color: "text-[#3c73bd]" },
  { head: "HttpRequest.uri", color: "text-[#b25014]" },
  { head: "action", color: "text-[#760b0d]" },
  { head: "requests", color: "text-[#173d80]" },
];

const p37 = "arn:aws:appsync:37...";
const p36 = "arn:aws:appsync:36...";
// acl, rule, type, source, method, country, client ip, label, uri, action
const metricRows: string[][] = [
  ["captcha-web-acl", "Default_Action", "REGULAR", p37, "PUT", "EG", "63.255.24.99", "", "main/posts/search", "ALLOW"],
  ["captcha-web-acl", "Default_Action", "REGULAR", p36, "POST", "EG", "211.231.213.44", "", "explore/category/w...", "ALLOW"],
  ["hello-world", "Default_Action", "REGULAR", "app/mendoza/r", "GET", "MW", "208.196.123.22", "", "explore/category/ca...", "ALLOW"],
  ["captcha-web-acl", "Default_Action", "REGULAR", "app/mendoza/r", "GET", "MW", "2.141.26.80", "", "tags/tags", "ALLOW"],
  ["captcha-web-acl", "Default_Action", "REGULAR", p36, "DELETE", "EG", "153.69.82.214", "", "explore/category/w...", "ALLOW"],
  ["captcha-web-acl", "Default_Action", "REGULAR", p36, "POST", "BY", "168.163.4.72", "", "search/posts/search", "ALLOW"],
  ["hello-world", "Default_Action", "REGULAR", "app/rice/z", "POST", "EG", "159.118.213.86", "", "posts/search/search", "ALLOW"],
  ["captcha-web-acl", "Default_Action", "REGULAR", "app/rice/z", "GET", "MV", "108.179.76.18", "", "main", "ALLOW"],
  ["captcha-web-acl", "Default_Action", "REGULAR", p37, "OPTIONS", "MV", "142.36.32.96", "", "main/posts/search", "ALLOW"],
  ["captcha-web-acl", "Default_Action", "REGULAR", p36, "DELETE", "EG", "157.233.77.149", "", "main/category", "ALLOW"],
  ["hello-world", "Default_Action", "REGULAR", "app/rice/z", "GET", "MV", "54.139.71.242", "", "posts/search/search", "ALLOW"],
  ["captcha-web-acl", "captcha-rule", "REGULAR", "app/mendoza/r", "PUT", "BY", "7.94.200.158", "", "posts", "CAPTCHA"],
  ["sql-injection-acl", "Default_Action", "REGULAR", p36, "POST", "MN", "26.52.166.178", "", "search/posts/search", "ALLOW"],
  ["captcha-web-acl", "Default_Action", "REGULAR", "app/rice/z", "POST", "EG", "211.231.213.44", "", "blog/search", "ALLOW"],
  ["rg-reference-acl", "RG-Reference", "GROUP", "app/brown/o", "PUT", "MN", "87.117.114.100", "awswaf:managed:a...", "blog/blog/search", "BLOCK"],
];

function MetricsTable() {
  const grid = "grid grid-cols-[214.4px_repeat(14,minmax(0,1fr))]";
  return (
    <Panel className="h-[676px]">
      <div className="flex flex-1 flex-col p-2 text-sm">
        <div className={`${grid} h-[29px] border-b border-[#232427]`}>
          {metricCols.map((c, i) => (
            <div key={c.head} className={`flex items-center gap-1 overflow-hidden whitespace-nowrap px-1.5 font-medium ${i === 14 ? "justify-end" : ""}`}>
              <span className={`overflow-hidden ${i === 10 ? "grow" : ""}`}>{c.head}</span>
              <FilterIcon />
            </div>
          ))}
        </div>
        {metricRows.map((row, r) => (
          <div key={r} className={`${grid} h-9 ${r < 14 ? "border-b border-[#232427]" : ""}`}>
            {["2023-11-09 11:45:00", "123456789012", "us-east-1", "arn:aws:wafv2:us-e...", ...row, "1"].map((cell, c) => (
              <div
                key={c}
                className={`flex items-center whitespace-nowrap px-1.5 ${c === 14 ? "justify-end" : "border-r border-[#232427]"} ${metricCols[c].color}`}
              >
                {cell}
              </div>
            ))}
          </div>
        ))}
        <div className="mt-auto mb-[5.6px] flex items-center pl-[998px] text-xs font-medium">
          <div className="flex h-6 w-8 items-center justify-center rounded-[2px] bg-[#17181b]">
            <AngleSide className="h-4 w-4 rotate-180 stroke-[#5f5f69]" />
          </div>
          <div className="ml-[9.5px] flex h-6 w-[22.5px] items-center justify-center rounded-[2px] bg-[#325ad4] text-white">1</div>
          {["2", "3", "4", "5", "6", "7"].map((n) => (
            <div key={n} className="ml-[9.4px] flex h-6 w-[24.2px] items-center justify-center rounded-[2px] border border-[#2b2b31] bg-[#202127]">
              {n}
            </div>
          ))}
          <div className="ml-[11px] flex w-[13px] justify-between">
            <span className="h-[3px] w-[3px] rounded-full bg-[#c4c1d6]" />
            <span className="h-[3px] w-[3px] rounded-full bg-[#c4c1d6]" />
            <span className="h-[3px] w-[3px] rounded-full bg-[#c4c1d6]" />
          </div>
          <div className="ml-[12px] flex h-6 w-[39.5px] items-center justify-center rounded-[2px] border border-[#2b2b31] bg-[#202127]">695</div>
          <div className="ml-[9.5px] flex h-6 w-8 items-center justify-center rounded-[2px] border border-[#2b2b31] bg-[#202127]">
            <AngleSide className="h-4 w-4 stroke-[#c4c1d6]" />
          </div>
          <span className="ml-[15.5px] font-normal tracking-[0.2px] text-[#85848f]">1 - 15 of 10425 rows</span>
        </div>
      </div>
    </Panel>
  );
}

/* ------------------------------------------------------------------- page */

export default function App() {
  return (
    <div className="h-screen w-full overflow-hidden bg-[#0c0d12]">
      <div className="flex h-[2898px] w-[2548px] flex-col font-[Inter,sans-serif] leading-normal tracking-[0.14px] text-[#c4c1d6] [zoom:1.41326]">
        <header className="flex h-10 shrink-0 items-center border-b-2 border-[#c6c7c6] bg-[#e9e9e9] pl-[14px] text-[12.7px] tracking-[-0.3px] text-[#262626]">
          <ScissorsLogo />
          <span className="ml-[6px]">Captured with Xnip</span>
        </header>
        <VariableBar />
        <main className="flex w-[2535.2px] flex-col gap-2 pt-[8.4px] pl-[7.2px]">
          <RowTitle>Overview (updates based on top time selection)</RowTitle>
          <div className="grid grid-cols-[1999.7px_520.3px] gap-2">
            <div className="flex flex-col gap-2">
              <div className="grid h-[448px] grid-cols-[520.3px_1471.4px] gap-2">
                <div className="flex flex-col gap-2">
                  <Stat title="Total Requests" value="17" />
                  <Stat title="Total Blocked Requests" value="3" />
                </div>
                <Panel title="Requests History">
                  <HistoryChart />
                  <Legend
                    className="pl-3"
                    rows={[
                      [
                        { name: "Allowed", value: "Last *: 47", dot: G },
                        { name: "Blocked", value: "Last *: 8", dot: R },
                        { name: "Captcha", value: "Last *: 3", dot: "bg-[#fa8a2c]" },
                      ],
                    ]}
                  />
                </Panel>
              </div>
              <Panel title="Country or Region By Blocked Requests" className="h-[942px]">
                <div className="relative h-[908px]">
                  <WorldMap />
                  <div className="absolute top-2 left-2 flex flex-col gap-px text-[15px] font-bold leading-none text-[#444]">
                    <span className="flex h-5 w-5 items-center justify-center rounded-t-[2px] bg-white">+</span>
                    <span className="flex h-[19px] w-5 items-center justify-center rounded-b-[2px] bg-white">−</span>
                  </div>
                  <div className="absolute right-2 bottom-[7px] flex h-5 w-5 items-center justify-center rounded-[2px] bg-white text-[15px] font-medium leading-none text-[#333]">i</div>
                </div>
              </Panel>
            </div>
            <div className="flex flex-col gap-2">
              <Panel title="WAF ACLs" className="h-[334px]">
                <Donut
                  id="acl" values={[7999, 3465, 3455, 2508]} cy={275.4} rIn={69} rOut={102} size={14} top={149} height={247} className="h-[247px]"
                  labels={[["46%", 2359.6, 276.2], ["20%", 2244.6, 367.4], ["20%", 2189.4, 284], ["14%", 2237.3, 210.8]]}
                />
                <Legend
                  className="pl-3"
                  rows={[
                    [{ name: "captcha-web-acl", value: "Value: 7,999", dot: G }, { name: "hello-world", value: "Value: 3,465", dot: Y }],
                    [{ name: "sql-injection-acl", value: "Value: 3,455", dot: B }, { name: "rg-reference-acl", value: "Value: 2,508", dot: O }],
                  ]}
                />
              </Panel>
              <Panel title="WAF Rules" className="h-[334px]">
                <Donut
                  id="rules" values={[13706, 2508, 1213]} cy={617.4} rIn={69} rOut={102} size={14} top={491} height={247} className="h-[247px]"
                  labels={[["79%", 2327.8, 696], ["14%", 2207.9, 576.3], ["7%", 2256.2, 546]]}
                />
                <Legend
                  className="pl-3"
                  rows={[
                    [{ name: "Default_Action", value: "Value: 13,706", dot: G }, { name: "RG-Reference", value: "Value: 2,508", dot: Y }],
                    [{ name: "captcha-rule", value: "Value: 1,213", dot: B }],
                  ]}
                />
              </Panel>
              <Panel title="Sources" className="h-[334px]">
                <Donut
                  id="src" values={[3590, 3502, 3482, 3467, 3386]} cy={933} rIn={51.5} rOut={75.6} size={11.8} top={833} height={194.4} className="h-[194.4px]"
                  labels={[["21%", 2312.8, 892.2], ["20%", 2334.1, 965.4], ["20%", 2271.9, 1006.5], ["20%", 2213.5, 960.8], ["19%", 2238, 891]]}
                />
                <Legend
                  className="pl-3"
                  rows={[
                    [{ name: "app/mendoza/r", value: "Value: 3,590", dot: G }],
                    [{ name: "arn:aws:appsync:378520057966:us-west-2:apis/p", value: "Value: 3,502", dot: Y }],
                    [{ name: "app/brown/o", value: "Value: 3,482", dot: B }],
                    [{ name: "arn:aws:appsync:364202728958:ap-east-1:apis/u", value: "Value: 3,467", dot: O }],
                  ]}
                />
              </Panel>
              <Panel title="HTTP Methods" className="h-[372px]">
                <Donut
                  id="http" values={[3912, 3683, 3388, 3317, 3127]} cy={1320.5} rIn={81.4} rOut={121} size={16.3} top={1175} height={284.7} className="h-[284.7px]"
                  labels={[["22%", 2340.4, 1257.6], ["21%", 2363.5, 1383.6], ["19%", 2254, 1433.6], ["19%", 2174.7, 1350.1], ["18%", 2220.5, 1249.6]]}
                />
                <Legend
                  className="pl-3"
                  rows={[
                    [
                      { name: "GET", value: "Value: 3,912", dot: G },
                      { name: "OPTIONS", value: "Value: 3,683", dot: Y },
                      { name: "DELETE", value: "Value: 3,388", dot: B },
                    ],
                    [{ name: "PUT", value: "Value: 3,317", dot: O }, { name: "POST", value: "Value: 3,127", dot: R }],
                  ]}
                />
              </Panel>
            </div>
          </div>
          <RowTitle>Top 5</RowTitle>
          <div className="grid grid-cols-4 gap-2">
            {topTables.map((t) => (
              <TopPanel key={t.title} table={t} />
            ))}
          </div>
          <RowTitle>Metrics</RowTitle>
          <MetricsTable />
        </main>
      </div>
    </div>
  );
}
